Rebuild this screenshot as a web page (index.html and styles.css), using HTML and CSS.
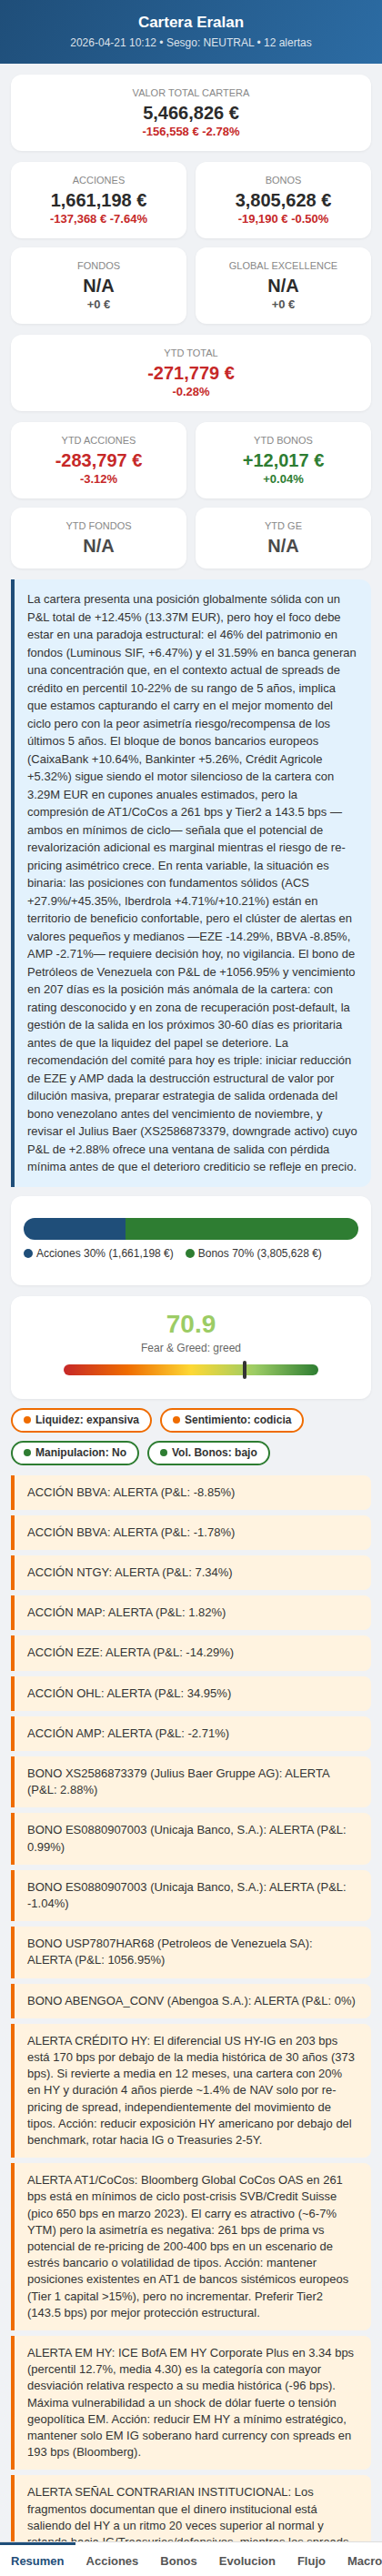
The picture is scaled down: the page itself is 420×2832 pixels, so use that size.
FILE: index.html
```html
<!DOCTYPE html>
<html lang="es">
<head>
<meta charset="utf-8">
<title>Cartera Eralan</title>
<link rel="stylesheet" href="styles.css">
</head>
<body>
<header class="top">
  <h1 class="title">Cartera Eralan</h1>
  <div class="subtitle">2026-04-21 10:12 • Sesgo: NEUTRAL • 12 alertas</div>
</header>

<main class="main">
  <section class="stat block">
    <div class="stat-label">Valor total cartera</div>
    <div class="stat-value">5,466,826 €</div>
    <div class="stat-change neg">-156,558 € -2.78%</div>
  </section>

  <div class="grid2 block">
    <section class="stat">
      <div class="stat-label">Acciones</div>
      <div class="stat-value">1,661,198 €</div>
      <div class="stat-change neg">-137,368 € -7.64%</div>
    </section>
    <section class="stat">
      <div class="stat-label">Bonos</div>
      <div class="stat-value">3,805,628 €</div>
      <div class="stat-change neg">-19,190 € -0.50%</div>
    </section>
    <section class="stat">
      <div class="stat-label">Fondos</div>
      <div class="stat-value">N/A</div>
      <div class="stat-change flat">+0 €</div>
    </section>
    <section class="stat">
      <div class="stat-label">Global Excellence</div>
      <div class="stat-value">N/A</div>
      <div class="stat-change flat">+0 €</div>
    </section>
  </div>

  <section class="stat block">
    <div class="stat-label">YTD Total</div>
    <div class="stat-value neg">-271,779 €</div>
    <div class="stat-change neg">-0.28%</div>
  </section>

  <div class="grid2 block">
    <section class="stat">
      <div class="stat-label">YTD Acciones</div>
      <div class="stat-value neg">-283,797 €</div>
      <div class="stat-change neg">-3.12%</div>
    </section>
    <section class="stat">
      <div class="stat-label">YTD Bonos</div>
      <div class="stat-value pos">+12,017 €</div>
      <div class="stat-change pos">+0.04%</div>
    </section>
    <section class="stat">
      <div class="stat-label">YTD Fondos</div>
      <div class="stat-value muted">N/A</div>
    </section>
    <section class="stat">
      <div class="stat-label">YTD GE</div>
      <div class="stat-value muted">N/A</div>
    </section>
  </div>

  <section class="summary">La cartera presenta una posición globalmente sólida con un P&amp;L total de +12.45% (13.37M EUR), pero hoy el foco debe estar en una paradoja estructural: el 46% del patrimonio en fondos (Luminous SIF, +6.47%) y el 31.59% en banca generan una concentración que, en el contexto actual de spreads de crédito en percentil 10-22% de su rango de 5 años, implica que estamos capturando el carry en el mejor momento del ciclo pero con la peor asimetría riesgo/recompensa de los últimos 5 años. El bloque de bonos bancarios europeos (CaixaBank +10.64%, Bankinter +5.26%, Crédit Agricole +5.32%) sigue siendo el motor silencioso de la cartera con 3.29M EUR en cupones anuales estimados, pero la compresión de AT1/CoCos a 261 bps y Tier2 a 143.5 bps —ambos en mínimos de ciclo— señala que el potencial de revalorización adicional es marginal mientras el riesgo de re-pricing asimétrico crece. En renta variable, la situación es binaria: las posiciones con fundamentos sólidos (ACS +27.9%/+45.35%, Iberdrola +4.71%/+10.21%) están en territorio de beneficio confortable, pero el clúster de alertas en valores pequeños y medianos —EZE -14.29%, BBVA -8.85%, AMP -2.71%— requiere decisión hoy, no vigilancia. El bono de Petróleos de Venezuela con P&amp;L de +1056.95% y vencimiento en 207 días es la posición más anómala de la cartera: con rating desconocido y en zona de recuperación post-default, la gestión de la salida en los próximos 30-60 días es prioritaria antes de que la liquidez del papel se deteriore. La recomendación del comité para hoy es triple: iniciar reducción de EZE y AMP dada la destrucción estructural de valor por dilución masiva, preparar estrategia de salida ordenada del bono venezolano antes del vencimiento de noviembre, y revisar el Julius Baer (XS2586873379, downgrade activo) cuyo P&amp;L de +2.88% ofrece una ventana de salida con pérdida mínima antes de que el deterioro crediticio se refleje en precio.</section>

  <section class="panel alloc">
    <div class="alloc-bar">
      <div class="seg seg-eq" style="width:30.39%"></div>
      <div class="seg seg-bd" style="width:69.61%"></div>
    </div>
    <div class="legend">
      <span class="legend-item"><span class="dot dot-eq"></span>Acciones 30% (1,661,198 €)</span>
      <span class="legend-item"><span class="dot dot-bd"></span>Bonos 70% (3,805,628 €)</span>
    </div>
  </section>

  <section class="panel fg">
    <div class="fg-value">70.9</div>
    <div class="fg-label">Fear &amp; Greed: greed</div>
    <div class="gauge">
      <span class="gauge-marker" style="left:70.9%"></span>
    </div>
  </section>

  <div class="chips">
    <span class="chip chip-warn"><span class="chip-dot"></span>Liquidez: expansiva</span>
    <span class="chip chip-warn"><span class="chip-dot"></span>Sentimiento: codicia</span>
    <span class="chip chip-ok"><span class="chip-dot"></span>Manipulacion: No</span>
    <span class="chip chip-ok"><span class="chip-dot"></span>Vol. Bonos: bajo</span>
  </div>

  <div class="alerts">
    <div class="alert">ACCIÓN BBVA: ALERTA (P&amp;L: -8.85%)</div>
    <div class="alert">ACCIÓN BBVA: ALERTA (P&amp;L: -1.78%)</div>
    <div class="alert">ACCIÓN NTGY: ALERTA (P&amp;L: 7.34%)</div>
    <div class="alert">ACCIÓN MAP: ALERTA (P&amp;L: 1.82%)</div>
    <div class="alert">ACCIÓN EZE: ALERTA (P&amp;L: -14.29%)</div>
    <div class="alert">ACCIÓN OHL: ALERTA (P&amp;L: 34.95%)</div>
    <div class="alert">ACCIÓN AMP: ALERTA (P&amp;L: -2.71%)</div>
    <div class="alert">BONO XS2586873379 (Julius Baer Gruppe AG): ALERTA (P&amp;L: 2.88%)</div>
    <div class="alert">BONO ES0880907003 (Unicaja Banco, S.A.): ALERTA (P&amp;L: 0.99%)</div>
    <div class="alert">BONO ES0880907003 (Unicaja Banco, S.A.): ALERTA (P&amp;L: -1.04%)</div>
    <div class="alert">BONO USP7807HAR68 (Petroleos de Venezuela SA): ALERTA (P&amp;L: 1056.95%)</div>
    <div class="alert">BONO ABENGOA_CONV (Abengoa S.A.): ALERTA (P&amp;L: 0%)</div>
    <div class="alert">ALERTA CRÉDITO HY: El diferencial US HY-IG en 203 bps está 170 bps por debajo de la media histórica de 30 años (373 bps). Si revierte a media en 12 meses, una cartera con 20% en HY y duración 4 años pierde ~1.4% de NAV solo por re-pricing de spread, independientemente del movimiento de tipos. Acción: reducir exposición HY americano por debajo del benchmark, rotar hacia IG o Treasuries 2-5Y.</div>
    <div class="alert">ALERTA AT1/CoCos: Bloomberg Global CoCos OAS en 261 bps está en mínimos de ciclo post-crisis SVB/Credit Suisse (pico 650 bps en marzo 2023). El carry es atractivo (~6-7% YTM) pero la asimetría es negativa: 261 bps de prima vs potencial de re-pricing de 200-400 bps en un escenario de estrés bancario o volatilidad de tipos. Acción: mantener posiciones existentes en AT1 de bancos sistémicos europeos (Tier 1 capital &gt;15%), pero no incrementar. Preferir Tier2 (143.5 bps) por mejor protección estructural.</div>
    <div class="alert">ALERTA EM HY: ICE BofA EM HY Corporate Plus en 3.34 bps (percentil 12.7%, media 4.30) es la categoría con mayor desviación relativa respecto a su media histórica (-96 bps). Máxima vulnerabilidad a un shock de dólar fuerte o tensión geopolítica EM. Acción: reducir EM HY a mínimo estratégico, mantener solo EM IG soberano hard currency con spreads en 193 bps (Bloomberg).</div>
    <div class="alert">ALERTA SEÑAL CONTRARIAN INSTITUCIONAL: Los fragmentos documentan que el dinero institucional está saliendo del HY a un ritmo 20 veces superior al normal y rotando hacia IG/Treasuries/defensivos, mientras los spreads siguen en mínimos de ciclo. Históricamente esta divergencia precede a ampliaciones de diferenciales.</div>
  </div>
</main>

<nav class="tabs">
  <span class="tab active">Resumen</span>
  <span class="tab">Acciones</span>
  <span class="tab">Bonos</span>
  <span class="tab">Evolucion</span>
  <span class="tab">Flujo</span>
  <span class="tab">Macro</span>
  <span class="tab">Alertas</span>
</nav>
</body>
</html>
```

FILE: styles.css
```css
* { box-sizing: border-box; }

body {
  margin: 0;
  background: #f0f2f5;
  font-family: "Liberation Sans", Arial, sans-serif;
  color: #333;
}

.top {
  background: linear-gradient(120deg, #1f4e79 0%, #2c6ca4 100%);
  color: #fff;
  text-align: center;
  padding: 15px 16px 16px;
}

.title {
  margin: 0;
  font-size: 17px;
  line-height: 20px;
  font-weight: bold;
}

.subtitle {
  margin-top: 5px;
  font-size: 12px;
  line-height: 14px;
  color: rgba(255, 255, 255, 0.85);
}

.main {
  padding: 12px 12px 60px;
}

.block { margin-bottom: 12px; }

.grid2 {
  display: grid;
  grid-template-columns: 1fr 1fr;
  gap: 10px;
}

.stat {
  background: #fff;
  border-radius: 12px;
  padding: 13px 8px 13px;
  text-align: center;
  box-shadow: 0 1px 3px rgba(0, 0, 0, 0.06);
}

.stat-label {
  font-size: 11px;
  line-height: 14px;
  color: #888;
  text-transform: uppercase;
}

.stat-value {
  margin-top: 3px;
  font-size: 20px;
  line-height: 24px;
  font-weight: bold;
  color: #2b2b2b;
}

.stat-change {
  margin-top: 1px;
  font-size: 13px;
  line-height: 16px;
  font-weight: bold;
}

.neg { color: #c62828; }
.pos { color: #2e7d32; }
.flat { color: #555; }
.stat-value.muted { color: #4a4a4a; }

.summary {
  background: #e3f2fd;
  border-left: 4px solid #1f4e79;
  border-radius: 0 12px 12px 0;
  padding: 12px 14px;
  font-size: 13px;
  line-height: 19.5px;
  color: #333;
  margin-bottom: 10px;
}

.panel {
  background: #fff;
  border-radius: 12px;
  box-shadow: 0 1px 3px rgba(0, 0, 0, 0.06);
}

.alloc {
  padding: 24px 14px 27px;
  margin-bottom: 12px;
}

.alloc-bar {
  display: flex;
  height: 24px;
  border-radius: 12px;
  overflow: hidden;
}

.seg-eq { background: #1f4e79; }
.seg-bd { background: #2e7d32; }

.legend {
  display: flex;
  gap: 13px;
  margin-top: 7px;
  font-size: 12px;
  line-height: 16px;
  color: #333;
}

.legend-item {
  display: inline-flex;
  align-items: center;
  gap: 4px;
}

.dot {
  width: 10px;
  height: 10px;
  border-radius: 50%;
  flex: none;
}

.dot-eq { background: #1f4e79; }
.dot-bd { background: #2e7d32; }

.fg {
  padding: 14px 14px 26px;
  text-align: center;
  margin-bottom: 10px;
}

.fg-value {
  font-size: 28px;
  line-height: 34px;
  font-weight: bold;
  color: #9ccc65;
}

.fg-label {
  margin-top: 2px;
  font-size: 12px;
  line-height: 15px;
  color: #666;
}

.gauge {
  position: relative;
  width: 280px;
  height: 12px;
  margin: 10px auto 0;
  border-radius: 6px;
  background: linear-gradient(90deg, #c62828 0%, #ef6c00 25%, #fdd835 50%, #9ccc65 75%, #2e7d32 100%);
}

.gauge-marker {
  position: absolute;
  top: -4px;
  width: 4px;
  height: 20px;
  margin-left: -2px;
  border-radius: 2px;
  background: #333;
}

.chips {
  display: flex;
  flex-wrap: wrap;
  gap: 9px 9px;
  margin-bottom: 11px;
}

.chip {
  display: inline-flex;
  align-items: center;
  gap: 5px;
  padding: 4px 12px;
  border: 2px solid;
  border-radius: 999px;
  background: #fff;
  font-size: 12px;
  line-height: 15px;
  font-weight: bold;
  color: #333;
}

.chip-dot {
  width: 8px;
  height: 8px;
  border-radius: 50%;
  flex: none;
}

.chip-warn { border-color: #ef6c00; }
.chip-warn .chip-dot { background: #ef6c00; }
.chip-ok { border-color: #2e7d32; }
.chip-ok .chip-dot { background: #2e7d32; }

.alerts {
  display: flex;
  flex-direction: column;
  gap: 6px;
}

.alert {
  background: #fff3e0;
  border-left: 4px solid #ef6c00;
  border-radius: 0 8px 8px 0;
  padding: 10px 14px;
  font-size: 13px;
  line-height: 18.2px;
  color: #333;
}

.tabs {
  position: fixed;
  left: 0;
  right: 0;
  bottom: 0;
  display: flex;
  background: #fff;
  border-top: 1px solid #ddd;
  overflow-x: auto;
  scrollbar-width: none;
}

.tab {
  flex: none;
  padding: 10px 12px 9px;
  border-top: 3px solid transparent;
  font-size: 13px;
  line-height: 15px;
  font-weight: bold;
  color: #555;
  white-space: nowrap;
}

.tab.active {
  border-top-color: #1f4e79;
  color: #1f4e79;
}
```
